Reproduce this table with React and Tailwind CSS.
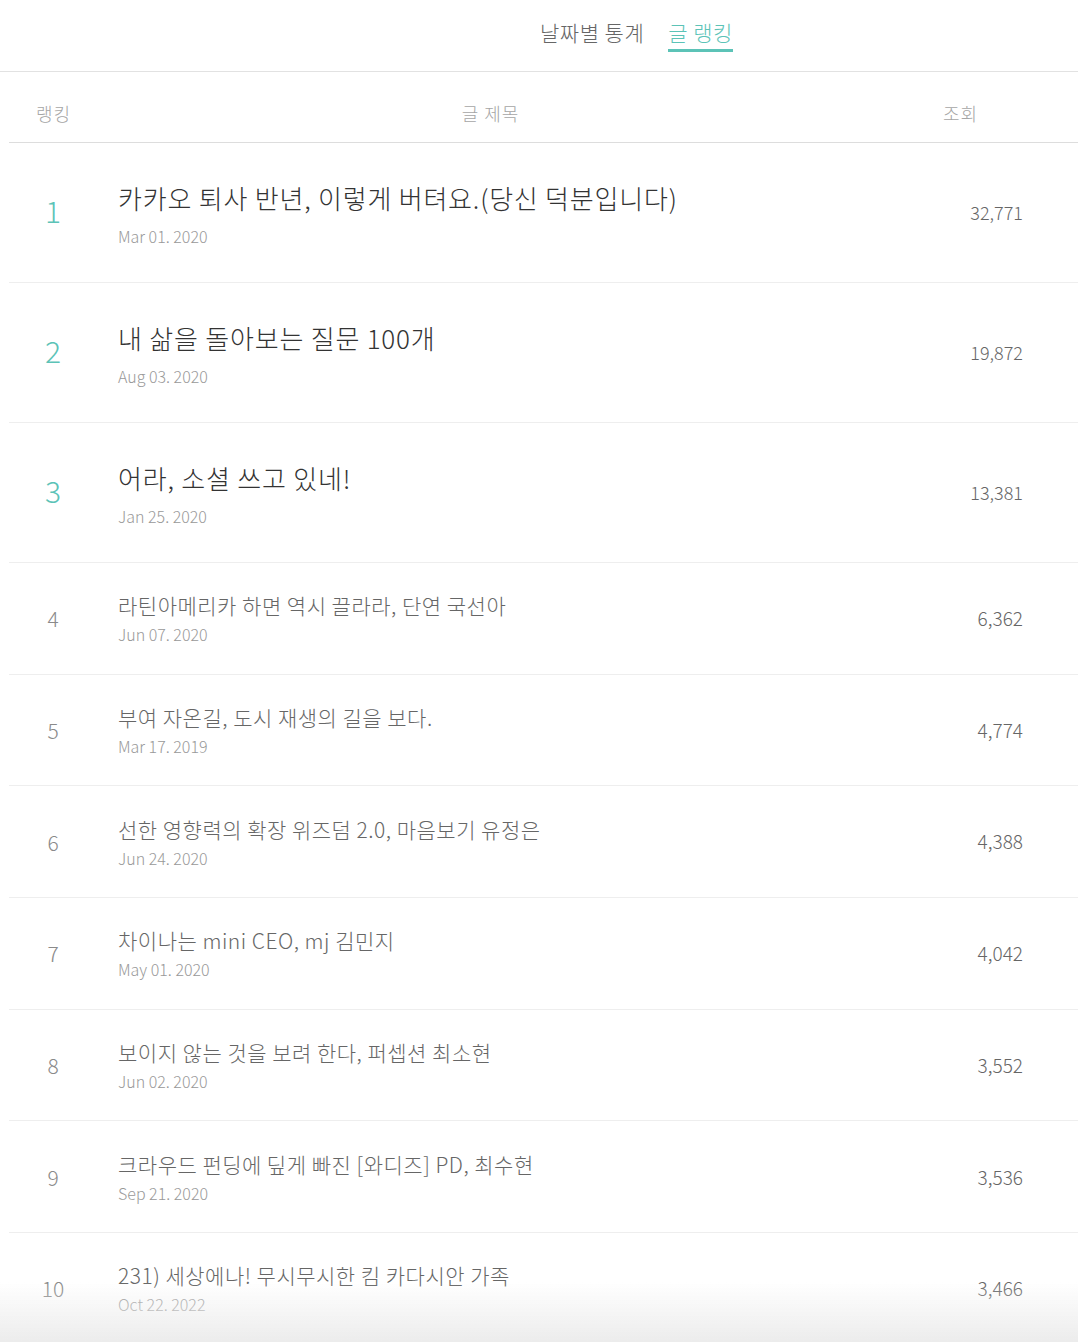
import React from "react";

const rows = [
  { r: 1, t: "카카오 퇴사 반년, 이렇게 버텨요.(당신 덕분입니다)", d: "Mar 01. 2020", v: "32,771" },
  { r: 2, t: "내 삶을 돌아보는 질문 100개", d: "Aug 03. 2020", v: "19,872" },
  { r: 3, t: "어라, 소셜 쓰고 있네!", d: "Jan 25. 2020", v: "13,381" },
  { r: 4, t: "라틴아메리카 하면 역시 끌라라, 단연 국선아", d: "Jun 07. 2020", v: "6,362" },
  { r: 5, t: "부여 자온길, 도시 재생의 길을 보다.", d: "Mar 17. 2019", v: "4,774" },
  { r: 6, t: "선한 영향력의 확장 위즈덤 2.0, 마음보기 유정은", d: "Jun 24. 2020", v: "4,388" },
  { r: 7, t: "차이나는 mini CEO, mj 김민지", d: "May 01. 2020", v: "4,042" },
  { r: 8, t: "보이지 않는 것을 보려 한다, 퍼셉션 최소현", d: "Jun 02. 2020", v: "3,552" },
  { r: 9, t: "크라우드 펀딩에 딮게 빠진 [와디즈] PD, 최수현", d: "Sep 21. 2020", v: "3,536" },
  { r: 10, t: "231) 세상에나! 무시무시한 킴 카다시안 가족", d: "Oct 22. 2022", v: "3,466" },
];

export default function App() {
  return (
    <div
      className="min-h-[1342px] bg-white font-light"
      style={{ fontFamily: '"Noto Sans CJK KR Light", "Noto Sans CJK KR", "Noto Sans", sans-serif' }}
    >
      <div className="h-[72px] border-b border-[#e2e2e2] flex items-start pl-[540px] pt-[15px] gap-[24px]">
        <div className="text-[21px] leading-[35px] text-[#666] tracking-[0.5px]">날짜별 통계</div>
        <div className="flex flex-col">
          <div className="text-[21px] leading-[35px] text-[#5cc3b7] tracking-[0.5px]">글 랭킹</div>
          <div className="h-[3px] bg-[#5cc3b7] -mt-[1px]"></div>
        </div>
      </div>
      <div className="ml-[9px]">
        <div className="h-[71px] flex items-center border-b border-[#ddd] text-[18px] text-[#a5a5a5] pt-[12px] tracking-[1px]">
          <div className="w-[88px] text-center pl-[1px]">랭킹</div>
          <div className="w-[786px] text-center pl-[1px]">글 제목</div>
          <div className="w-[154px] text-center pl-[1px]">조회</div>
        </div>
        {rows.map((row) => {
          const top = row.r <= 3;
          return (
            <div
              key={row.r}
              className={
                "flex items-center border-b border-[#eee] " +
                (top ? "h-[140px]" : "h-[111.7px]")
              }
            >
              <div
                className={
                  "w-[88px] text-center " +
                  (top ? "text-[30px] text-[#5cc3b7] leading-[40px] pb-[6px]" : "text-[21px] text-[#8a8a8a] leading-[30px]")
                }
              >
                {row.r}
              </div>
              <div className="w-[786px] pl-[21px]">
                {top ? (
                  <div className="pt-[6px]">
                    <div className="text-[26px] leading-[36px] text-[#333] -mt-[4px] tracking-[0.8px]">{row.t}</div>
                    <div className="text-[16px] leading-[24px] text-[#999] mt-[8px]">{row.d}</div>
                  </div>
                ) : (
                  <>
                    <div className="text-[21px] leading-[30px] text-[#666] tracking-[0.5px]">{row.t}</div>
                    <div className="text-[16px] leading-[24px] text-[#999] mt-[2px]">{row.d}</div>
                  </>
                )}
              </div>
              <div
                className={
                  "w-[140px] text-right text-[#666] " +
                  (top ? "text-[18px]" : "text-[19px]")
                }
              >
                {row.v}
              </div>
            </div>
          );
        })}
      </div>
      <div className="fixed bottom-0 inset-x-0 h-[60px] bg-gradient-to-b from-white/0 to-[#ececec] pointer-events-none"></div>
    </div>
  );
}
